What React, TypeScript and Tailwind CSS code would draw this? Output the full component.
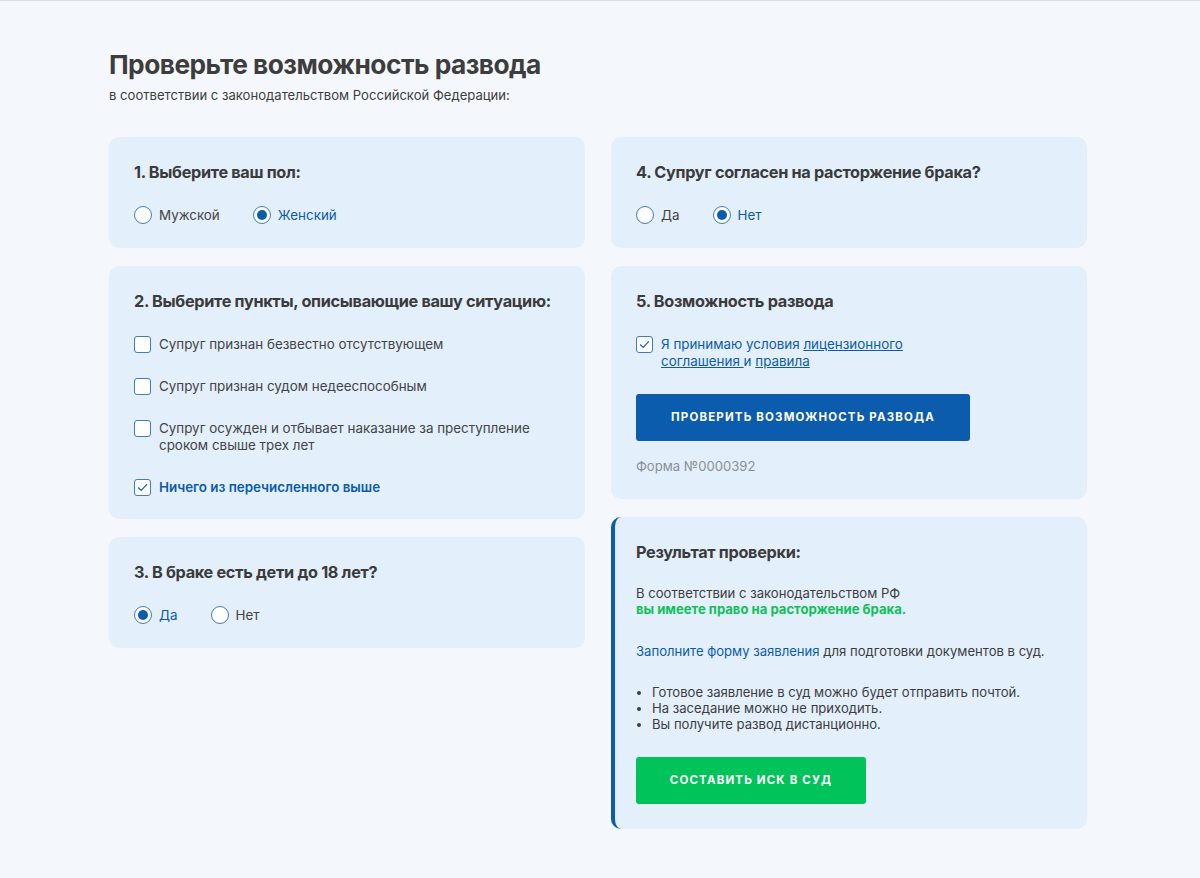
import type { ReactNode } from "react";

// ─── Divorce check form ──────────────────────────────────────────────────────

const font = { fontFamily: "Inter, 'Noto Sans', sans-serif" };

function Card({ children, className = "" }: { children: ReactNode; className?: string }) {
  return <div className={`rounded-[10px] bg-[#e3effb] px-[25px] ${className}`}>{children}</div>;
}

function Heading({ children }: { children: ReactNode }) {
  return (
    <h2 className="text-[16.3px] font-bold leading-[22px] tracking-[-0.02em] text-[#3b3b3b]">{children}</h2>
  );
}

function Radio({ label, checked = false }: { label: string; checked?: boolean }) {
  return (
    <label className="flex items-center gap-[7px]">
      <span className="flex h-[18px] w-[18px] items-center justify-center rounded-full border-[1.5px] border-[#3f7cc0] bg-white">
        {checked && <span className="h-[10px] w-[10px] rounded-full bg-[#0b5cad]" />}
      </span>
      <span className={`text-[13.4px] ${checked ? "text-[#0b5cad]" : "text-[#444]"}`}>{label}</span>
    </label>
  );
}

function Box({ checked = false }: { checked?: boolean }) {
  return (
    <span className="flex h-[17px] w-[17px] shrink-0 items-center justify-center rounded-[3px] border-[1.5px] border-[#3f7cc0] bg-white">
      {checked && (
        <svg viewBox="0 0 12 12" className="h-[11px] w-[11px]" fill="none">
          <path d="M1.5 6.3 4.6 9.2 10.5 2.8" stroke="#0b5cad" strokeWidth="1.2" strokeLinecap="round" strokeLinejoin="round" />
        </svg>
      )}
    </span>
  );
}

function CheckItem({ children, checked = false }: { children: ReactNode; checked?: boolean }) {
  return (
    <div className="flex items-start gap-[8px]">
      <Box checked={checked} />
      <span
        className={`text-[13.4px] leading-[17px] ${checked ? "font-semibold text-[#0b5cad]" : "text-[#444]"}`}
      >
        {children}
      </span>
    </div>
  );
}

export default function App() {
  return (
    <div className="min-h-[878px] border-t border-[#d6dde5] bg-[#f4f8fc] pb-[48px] text-[#444]" style={font}>
      <div className="ml-[109px] w-[978px] pt-[47px]">
        <h1 className="text-[26.3px] font-bold leading-[34px] tracking-[-0.02em] text-[#3d3d3d]">
          Проверьте возможность развода
        </h1>
        <p className="mt-[4px] text-[13.1px] leading-[18px] text-[#3d3d3d]">
          в соответствии с законодательством Российской Федерации:
        </p>

        <div className="mt-[33px] grid grid-cols-2 gap-x-[26px]">
          {/* ── Left column ─────────────────────────────── */}
          <div className="flex flex-col gap-[18px]">
            <Card className="h-[111px] pt-[24px]">
              <Heading>1. Выберите ваш пол:</Heading>
              <div className="mt-[22px] flex gap-[33px]">
                <Radio label="Мужской" />
                <Radio label="Женский" checked />
              </div>
            </Card>

            <Card className="h-[253px] pt-[24px]">
              <Heading>2. Выберите пункты, описывающие вашу ситуацию:</Heading>
              <div className="mt-[24px] flex flex-col gap-[25px]">
                <CheckItem>Супруг признан безвестно отсутствующем</CheckItem>
                <CheckItem>Супруг признан судом недееспособным</CheckItem>
                <CheckItem>
                  Супруг осужден и отбывает наказание за преступление
                  <br />
                  сроком свыше трех лет
                </CheckItem>
                <CheckItem checked>Ничего из перечисленного выше</CheckItem>
              </div>
            </Card>

            <Card className="h-[111px] pt-[24px]">
              <Heading>3. В браке есть дети до 18 лет?</Heading>
              <div className="mt-[22px] flex gap-[33px]">
                <Radio label="Да" checked />
                <Radio label="Нет" />
              </div>
            </Card>
          </div>

          {/* ── Right column ────────────────────────────── */}
          <div className="flex flex-col gap-[18px]">
            <Card className="h-[111px] pt-[24px]">
              <Heading>4. Супруг согласен на расторжение брака?</Heading>
              <div className="mt-[22px] flex gap-[33px]">
                <Radio label="Да" />
                <Radio label="Нет" checked />
              </div>
            </Card>

            <Card className="h-[233px] pt-[24px]">
              <Heading>5. Возможность развода</Heading>
              <div className="mt-[24px] flex items-start gap-[8px]">
                <Box checked />
                <span className="text-[13.4px] leading-[17px] text-[#0b5cad]">
                  Я принимаю условия <a className="underline">лицензионного</a>
                  <br />
                  <a className="underline">соглашения </a>и <a className="underline">правила</a>
                </span>
              </div>
              <button className="mt-[24px] h-[47px] w-[334px] rounded-[3px] bg-[#0b5cad] text-[11.5px] font-bold tracking-[0.1em] text-white">
                ПРОВЕРИТЬ ВОЗМОЖНОСТЬ РАЗВОДА
              </button>
              <p className="mt-[16px] text-[13.1px] text-[#8a8f96]">Форма №0000392</p>
            </Card>

            <div className="h-[312px] rounded-[10px] border-l-[4px] border-[#0b5cad] bg-[#e3effb] pl-[21px] pr-[25px] pt-[24px]">
              <Heading>Результат проверки:</Heading>
              <p className="mt-[22px] text-[13.1px] leading-[16px] text-[#3d3d3d]">
                В соответствии с законодательством РФ
                <br />
                <span className="font-bold text-[#10c15a]">вы имеете право на расторжение брака.</span>
              </p>
              <p className="mt-[26px] text-[13.1px] leading-[16px] text-[#3d3d3d]">
                <a className="text-[#0b5cad]">Заполните форму заявления</a> для подготовки документов в суд.
              </p>
              <ul className="mt-[25px] list-disc pl-[16px] text-[13.1px] leading-[16px] text-[#3d3d3d]">
                <li>Готовое заявление в суд можно будет отправить почтой.</li>
                <li>На заседание можно не приходить.</li>
                <li>Вы получите развод дистанционно.</li>
              </ul>
              <button className="mt-[25px] h-[47px] w-[230px] rounded-[3px] bg-[#00c45a] text-[11.5px] font-bold tracking-[0.1em] text-white">
                СОСТАВИТЬ ИСК В СУД
              </button>
            </div>
          </div>
        </div>
      </div>
    </div>
  );
}
